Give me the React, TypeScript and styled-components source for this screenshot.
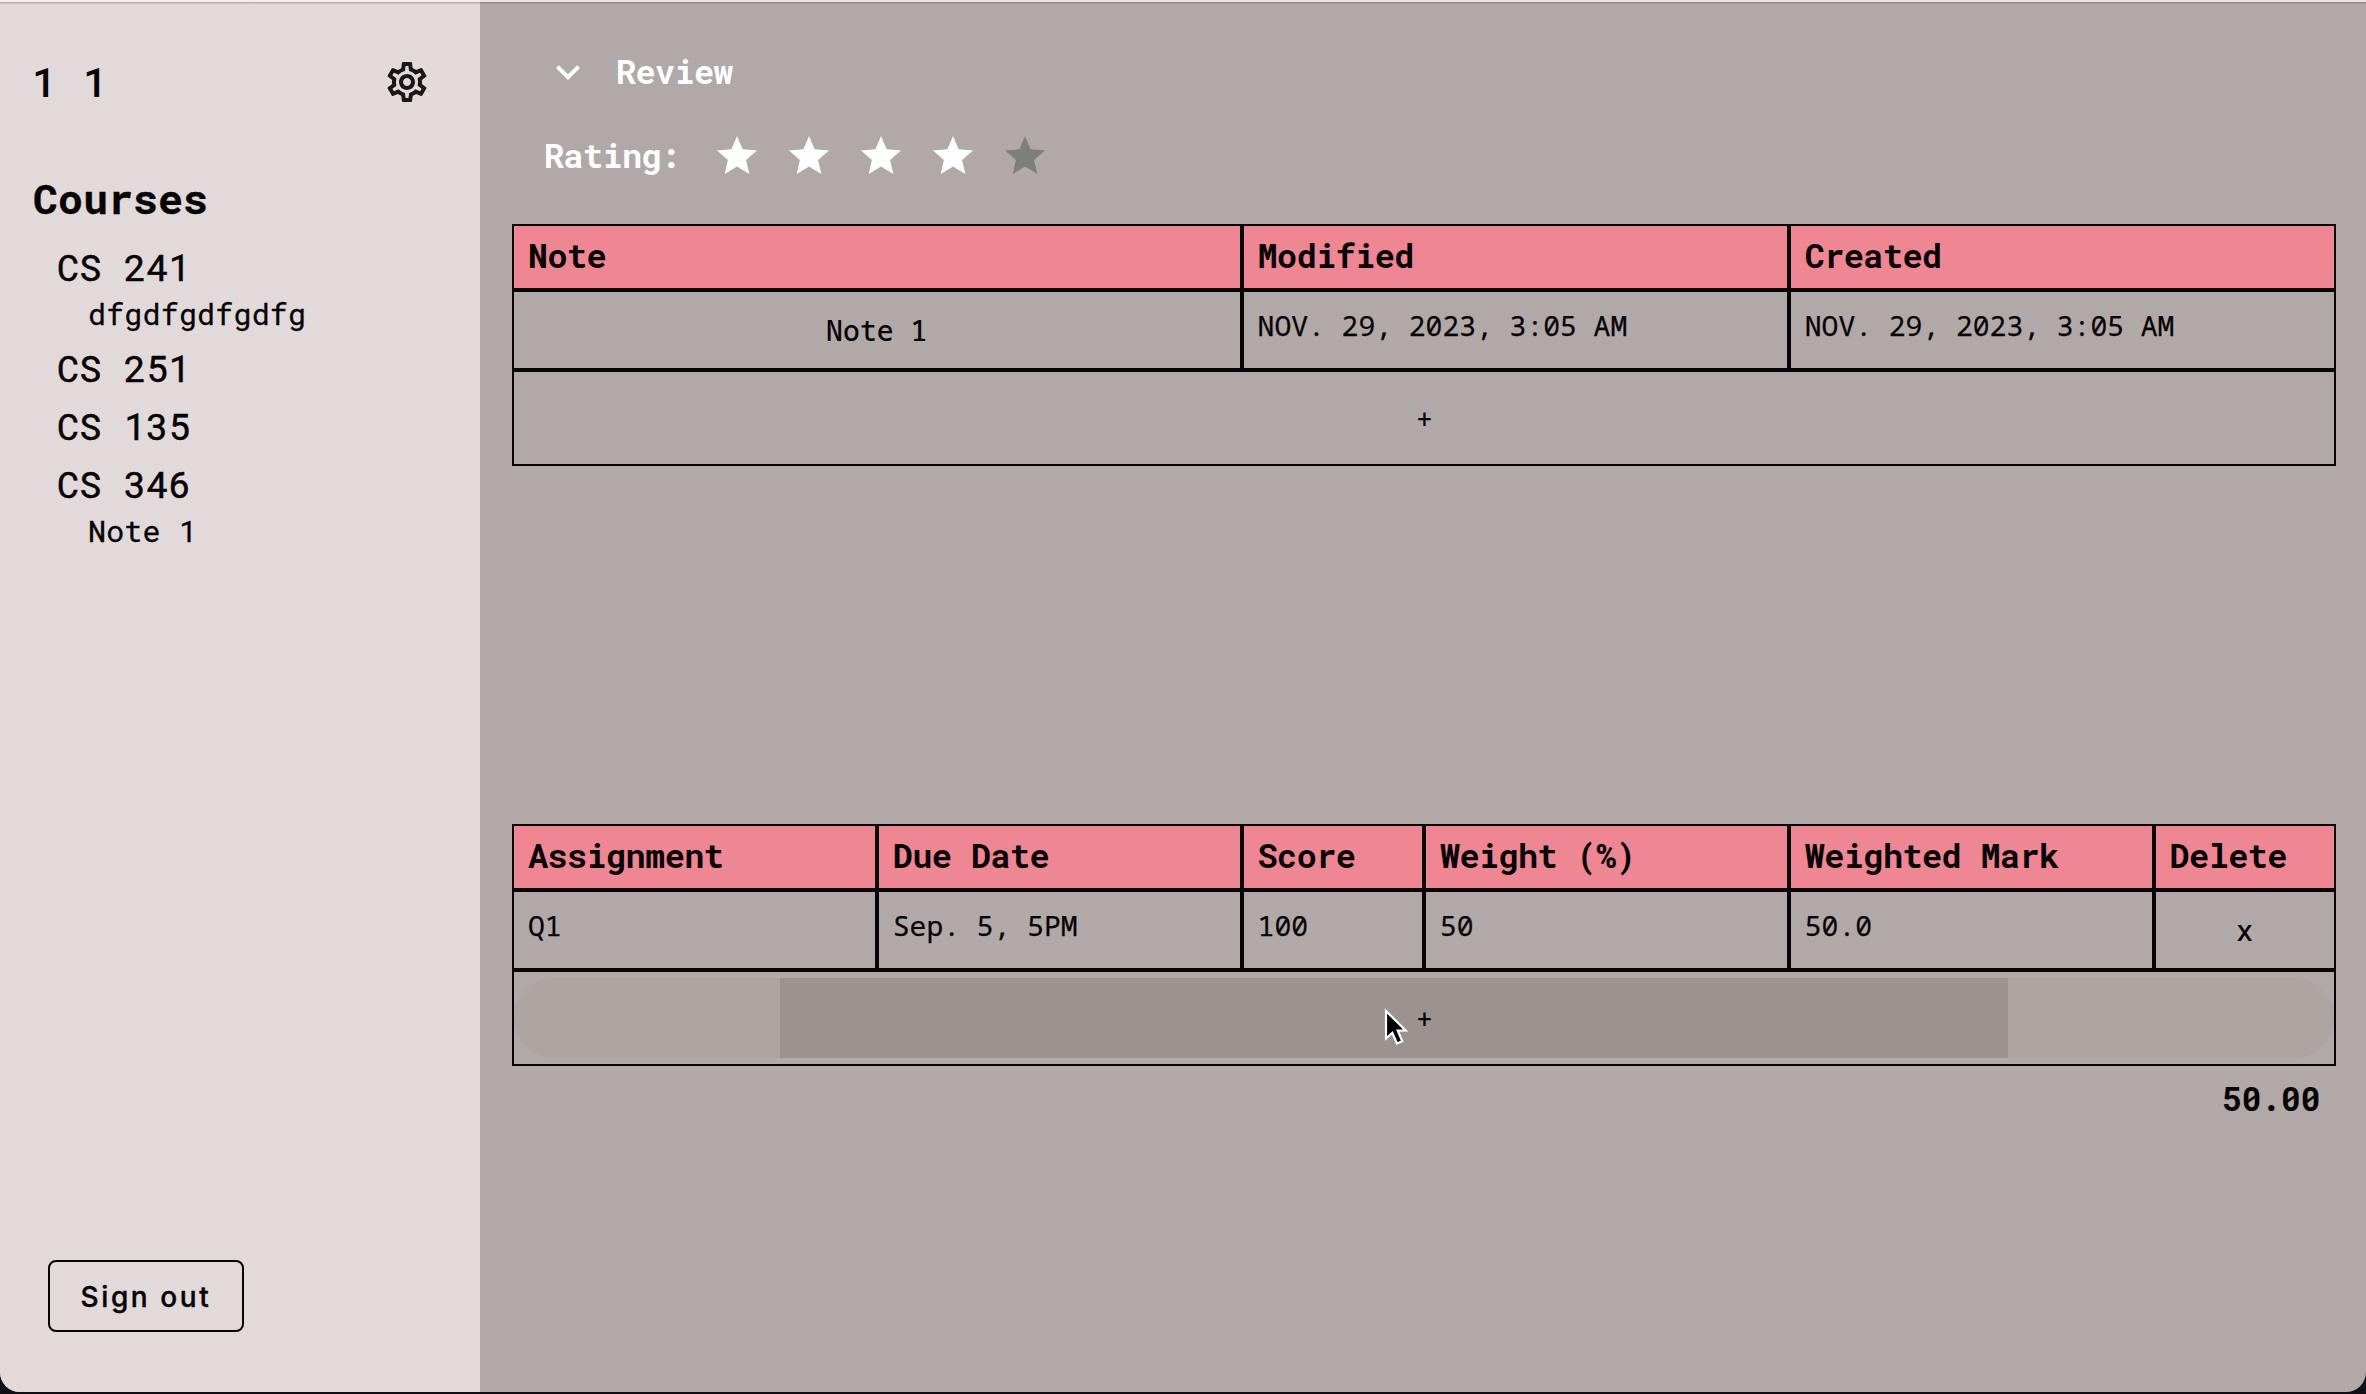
import React from 'react';
import styled, { createGlobalStyle, css } from 'styled-components';
import { MdExpandMore, MdOutlineSettings, MdStar } from 'react-icons/md';

const display = '"Roboto Mono", "DejaVu Sans Mono", monospace';
const mono = '"Noto Sans Mono", "DejaVu Sans Mono", monospace';
const ink = '#080304';

const GlobalStyle = createGlobalStyle`
  * { box-sizing: border-box; }
  body { margin: 0; background: #121014; }
`;

const Window = styled.div`
  position: relative;
  display: flex;
  width: 2366px;
  height: 1392px;
  overflow: hidden;
  border-radius: 0 0 20px 20px;
  background: #b1a9a7;
  color: ${ink};
`;

const TopEdge = styled.div`
  position: absolute;
  inset: 0 0 auto 0;
  height: 4px;
  background: linear-gradient(to bottom, rgba(255, 245, 248, 0.75) 2px, rgba(60, 48, 54, 0.3) 2px, rgba(60, 48, 54, 0.1) 4px);
`;

const Sidebar = styled.aside`
  display: flex;
  flex-direction: column;
  flex: none;
  width: 480px;
  padding: 52px 49px 60px 32px;
  background: #e2dada;
  font-family: ${display};
`;

const UserBar = styled.header`
  display: flex;
  justify-content: space-between;
  align-items: center;
  height: 60px;
  font-size: 41px;
  font-weight: 500;
  line-height: 60px;
  letter-spacing: 0.9px;
  white-space: pre;
`;

const UserName = styled.span`
  padding-bottom: 2px;
  line-height: 58px;
`;

const Heading = styled.h2`
  margin: 56px 0 10px;
  padding-left: 1px;
  font-size: 41.5px;
  font-weight: 700;
  line-height: 60px;
  letter-spacing: 0.1px;
  -webkit-text-stroke: 0.4px ${ink};
`;

const CourseList = styled.nav`
  flex: 1;
  padding-left: 25px;
`;

const Course = styled.div`
  font-size: 37px;
  font-weight: 400;
  line-height: 58px;
  letter-spacing: 0.1px;
  -webkit-text-stroke: 0.5px ${ink};
`;

const CourseNote = styled.div`
  height: 42.8px;
  padding-left: 31px;
  font-size: 30px;
  font-weight: 400;
  line-height: 36px;
  letter-spacing: 0.18px;
  -webkit-text-stroke: 0.3px ${ink};
`;

const SignOut = styled.button`
  width: 196px;
  height: 72px;
  margin-left: 16px;
  padding: 2px 0 0;
  border: 2px solid ${ink};
  border-radius: 8px;
  background: none;
  color: ${ink};
  font: 500 28px Inter, sans-serif;
  letter-spacing: 2.6px;
  -webkit-text-stroke: 0.4px ${ink};
`;

const Main = styled.main`
  flex: 1;
  padding: 48px 30px 0 32px;
`;

const HeaderLine = styled.div<{ $left: number; $gap: number }>`
  display: flex;
  align-items: flex-start;
  gap: ${p => p.$gap}px;
  height: 48px;
  padding-left: ${p => p.$left}px;
  color: #fff;
`;

const HeaderText = styled.span`
  font: 700 33.5px/46px ${display};
  letter-spacing: -0.6px;
`;

const Review = styled.section`
  display: grid;
  gap: 36px;
  margin-bottom: 44px;
`;

const Stars = styled.div`
  display: flex;
  gap: 24px;
`;

const Table = styled.div`
  width: 1824px;
`;

const NotesTable = styled(Table)`
  margin-bottom: 358px;
`;

const Row = styled.div<{ $cols: string; $height: number }>`
  display: grid;
  grid-template-columns: ${p => p.$cols};
  height: ${p => p.$height}px;
`;

const HeadCell = styled.div`
  padding: 0 14px;
  border: 2px solid ${ink};
  background: #ee8693;
  font: 700 33.5px/59px ${display};
  letter-spacing: -0.58px;
  white-space: nowrap;
`;

const Cell = styled.div<{ $button?: boolean }>`
  padding: 0 14px;
  border: 2px solid ${ink};
  font: 400 28px/66px ${mono};
  -webkit-text-stroke: 0.25px ${ink};
  ${p =>
    p.$button &&
    css`
      display: grid;
      place-items: center;
      font-weight: 500;
      line-height: 38px;
      letter-spacing: 0.1px;
      -webkit-text-stroke: 0;
    `}
`;

const AddCell = styled.div`
  display: grid;
  align-items: center;
  border: 2px solid ${ink};
`;

const AddButton = styled.button<{ $hover?: boolean }>`
  position: relative;
  overflow: hidden;
  height: 80px;
  padding: 1px 0 0 1px;
  border: 0;
  border-radius: 40px;
  background: ${p => (p.$hover ? '#aca4a1' : 'transparent')};
  color: ${ink};
  font: 500 28px ${mono};
`;

const Ripple = styled.span`
  position: absolute;
  top: 0;
  left: 266px;
  width: 1228px;
  height: 80px;
  background: #9c928f;
`;

const Label = styled.span`
  position: relative;
`;

const Total = styled.div`
  padding: 11px 16px 0 0;
  text-align: right;
  font: 700 33.5px/42px ${display};
  letter-spacing: -0.5px;
`;

const Pointer = styled.svg`
  position: absolute;
  left: 1383px;
  top: 1006px;
`;

const noteCols = '4fr 3fr 3fr';
const markCols = '2fr 2fr 1fr 2fr 2fr 1fr';
const markHeads = ['Assignment', 'Due Date', 'Score', 'Weight (%)', 'Weighted Mark', 'Delete'];
const marks = ['Q1', 'Sep. 5, 5PM', '100', '50', '50.0'];
const courses = [
  { name: 'CS 241', note: 'dfgdfgdfgdfg' },
  { name: 'CS 251' },
  { name: 'CS 135' },
  { name: 'CS 346', note: 'Note 1' },
];

export default function App() {
  return (
    <>
      <GlobalStyle />
      <Window>
        <Sidebar>
          <UserBar>
            <UserName>1 1</UserName>
            <MdOutlineSettings size={48} color="#1b1618" />
          </UserBar>
          <Heading>Courses</Heading>
          <CourseList>
            {courses.map(c => (
              <React.Fragment key={c.name}>
                <Course>{c.name}</Course>
                {c.note && <CourseNote>{c.note}</CourseNote>}
              </React.Fragment>
            ))}
          </CourseList>
          <SignOut>Sign out</SignOut>
        </Sidebar>
        <Main>
          <Review>
            <HeaderLine $left={32} $gap={24}>
              <MdExpandMore size={48} />
              <HeaderText>Review</HeaderText>
            </HeaderLine>
            <HeaderLine $left={32} $gap={32}>
              <HeaderText>Rating:</HeaderText>
              <Stars>
                {[1, 2, 3, 4, 5].map(n => (
                  <MdStar key={n} size={48} color={n < 5 ? '#fff' : '#807e7d'} />
                ))}
              </Stars>
            </HeaderLine>
          </Review>
          <NotesTable>
            <Row $cols={noteCols} $height={66}>
              <HeadCell>Note</HeadCell>
              <HeadCell>Modified</HeadCell>
              <HeadCell>Created</HeadCell>
            </Row>
            <Row $cols={noteCols} $height={80}>
              <Cell $button>Note 1</Cell>
              <Cell>NOV. 29, 2023, 3:05 AM</Cell>
              <Cell>NOV. 29, 2023, 3:05 AM</Cell>
            </Row>
            <Row $cols="1fr" $height={96}>
              <AddCell>
                <AddButton>
                  <Label>+</Label>
                </AddButton>
              </AddCell>
            </Row>
          </NotesTable>
          <Table>
            <Row $cols={markCols} $height={66}>
              {markHeads.map(h => (
                <HeadCell key={h}>{h}</HeadCell>
              ))}
            </Row>
            <Row $cols={markCols} $height={80}>
              {marks.map(m => (
                <Cell key={m}>{m}</Cell>
              ))}
              <Cell $button>x</Cell>
            </Row>
            <Row $cols="1fr" $height={96}>
              <AddCell>
                <AddButton $hover>
                  <Ripple />
                  <Label>+</Label>
                </AddButton>
              </AddCell>
            </Row>
          </Table>
          <Total>50.00</Total>
        </Main>
        <TopEdge />
        <Pointer width="28" height="42" viewBox="0 0 28 42">
          <path
            d="M3 5 L3 32.5 L9.3 26.8 L14 37.5 L19.3 35.2 L14.7 24.6 L22.6 24.4 Z"
            fill="#000"
            stroke="#fff"
            strokeWidth="2.2"
          />
        </Pointer>
      </Window>
    </>
  );
}
